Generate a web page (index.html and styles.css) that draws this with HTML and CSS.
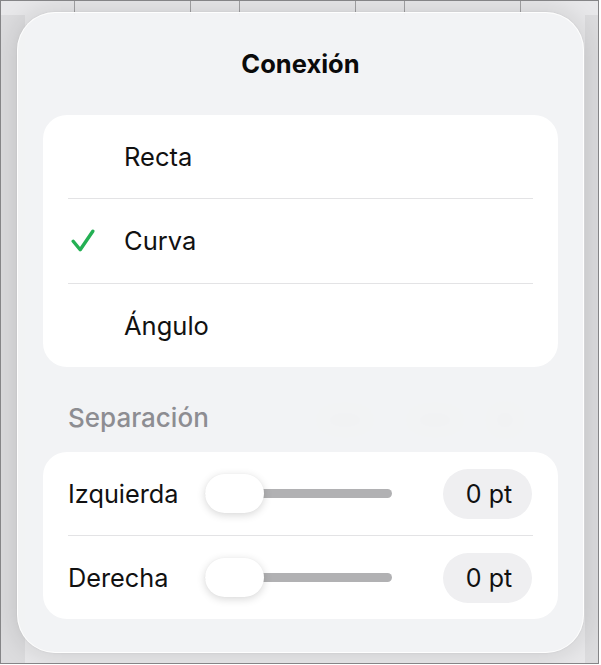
FILE: index.html
```html
<!DOCTYPE html>
<html lang="es">
<head>
<meta charset="utf-8">
<title>Conexión</title>
<link rel="stylesheet" href="styles.css">
</head>
<body>
<div class="frame">
  <div class="page">
    <div class="ruler">
      <div class="cell c-first"></div>
      <div class="cell c-wide"></div>
      <div class="cell c-narrow"></div>
      <div class="cell c-wide"></div>
      <div class="cell c-narrow"></div>
      <div class="cell c-wide"></div>
      <div class="cell c-rest"></div>
    </div>
    <div class="sheet">
      <div class="blur b1"></div>
      <div class="blur b2"></div>
      <div class="blur b3"></div>
    </div>
  </div>

  <div class="popover">
    <div class="title">Conexión</div>

    <div class="card">
      <div class="option">
        <span class="check"></span>
        <span class="opt-label">Recta</span>
      </div>
      <div class="sep"></div>
      <div class="option">
        <span class="check">
          <svg viewBox="0 0 24 23" width="24" height="23" aria-hidden="true">
            <path d="M2.2 12.2 L9.2 20.8 L21.8 2.2" fill="none" stroke="#24b054" stroke-width="3.4" stroke-linecap="round" stroke-linejoin="round"/>
          </svg>
        </span>
        <span class="opt-label">Curva</span>
      </div>
      <div class="sep"></div>
      <div class="option">
        <span class="check"></span>
        <span class="opt-label">Ángulo</span>
      </div>
    </div>

    <div class="section-label">Separación</div>

    <div class="card card-sliders">
      <div class="srow">
        <span class="slabel">Izquierda</span>
        <div class="slider">
          <div class="track"></div>
          <div class="thumb"></div>
        </div>
        <span class="pill">0 pt</span>
      </div>
      <div class="sep"></div>
      <div class="srow">
        <span class="slabel">Derecha</span>
        <div class="slider">
          <div class="track"></div>
          <div class="thumb"></div>
        </div>
        <span class="pill">0 pt</span>
      </div>
    </div>
  </div>
</div>
</body>
</html>
```
FILE: styles.css
```css
* { box-sizing: border-box; }

html, body {
  margin: 0;
  padding: 0;
  background: #ffffff;
}

body {
  font-family: Inter, "Noto Sans", "Liberation Sans", sans-serif;
  color: #111111;
}

.frame {
  position: relative;
  width: 599px;
  height: 664px;
  border: 1px solid #858587;
  overflow: hidden;
  background: #dcdcde;
}

.page {
  display: flex;
  flex-direction: column;
  height: 100%;
}

.ruler {
  display: flex;
  height: 14px;
  background: #e8e8ea;
}

.cell { height: 100%; }
.c-first { width: 73px; }
.c-wide { width: 116px; border-left: 1px solid #a2a2a4; }
.c-narrow { width: 49px; border-left: 1px solid #a2a2a4; }
.c-rest { flex: 1; border-left: 1px solid #a2a2a4; }

.sheet {
  position: relative;
  flex: 1;
  margin: 0 13px 0 24px;
  background: #e8e8ea;
}

.blur {
  position: absolute;
  border-radius: 50%;
  background: #b8b8bb;
  filter: blur(6px);
}
.b1 { left: 300px; top: 398px; width: 40px; height: 14px; }
.b2 { left: 390px; top: 398px; width: 40px; height: 14px; }
.b3 { left: 470px; top: 396px; width: 20px; height: 18px; }

.popover {
  position: absolute;
  left: 16px;
  top: 11px;
  width: 567px;
  height: 641px;
  padding: 0 25px;
  border-radius: 38px;
  background: rgba(243, 244, 245, 0.96);
  border: 1px solid rgba(255, 255, 255, 0.9);
  box-shadow: 0 0 28px rgba(0, 0, 0, 0.14), 0 0 2px rgba(0, 0, 0, 0.08);
  display: flex;
  flex-direction: column;
}

.title {
  height: 102px;
  display: flex;
  align-items: center;
  justify-content: center;
  font-size: 25.5px;
  font-weight: 700;
  color: #0a0a0a;
  padding-bottom: 2px;
}

.card {
  background: #ffffff;
  border-radius: 24px;
  display: flex;
  flex-direction: column;
  height: 252px;
}

.sep {
  height: 1px;
  margin: 0 25px;
  background: #e3e3e5;
  flex: 0 0 1px;
}

.option {
  flex: 1;
  display: flex;
  align-items: center;
  padding-left: 28px;
}

.check {
  width: 24px;
  height: 23px;
  display: flex;
  margin-right: 29px;
}

.opt-label {
  font-size: 25.5px;
  color: #111111;
}

.section-label {
  height: 85px;
  padding-top: 34px;
  line-height: 34px;
  padding-left: 25px;
  font-size: 26px;
  font-weight: 500;
  color: #8d8d92;
}

.card-sliders {
  height: 167px;
}

.srow {
  flex: 1;
  display: flex;
  align-items: center;
  padding: 0 26px 0 25px;
}

.slabel {
  flex: 0 0 137px;
  font-size: 25.3px;
  color: #111111;
}

.slider {
  position: relative;
  width: 187px;
  height: 40px;
  display: flex;
  align-items: center;
}

.track {
  width: 100%;
  height: 9px;
  border-radius: 5px;
  background: #b1b1b3;
}

.thumb {
  position: absolute;
  left: 0;
  top: 0;
  width: 59px;
  height: 39px;
  border-radius: 20px;
  background: #ffffff;
  box-shadow: 0 2px 9px rgba(0, 0, 0, 0.16), 0 0 1px rgba(0, 0, 0, 0.06);
}

.pill {
  margin-left: auto;
  width: 89px;
  height: 50px;
  border-radius: 25px;
  background: #efeff1;
  display: flex;
  align-items: center;
  justify-content: center;
  font-size: 25px;
  color: #111111;
  padding-left: 3px;
}
```
